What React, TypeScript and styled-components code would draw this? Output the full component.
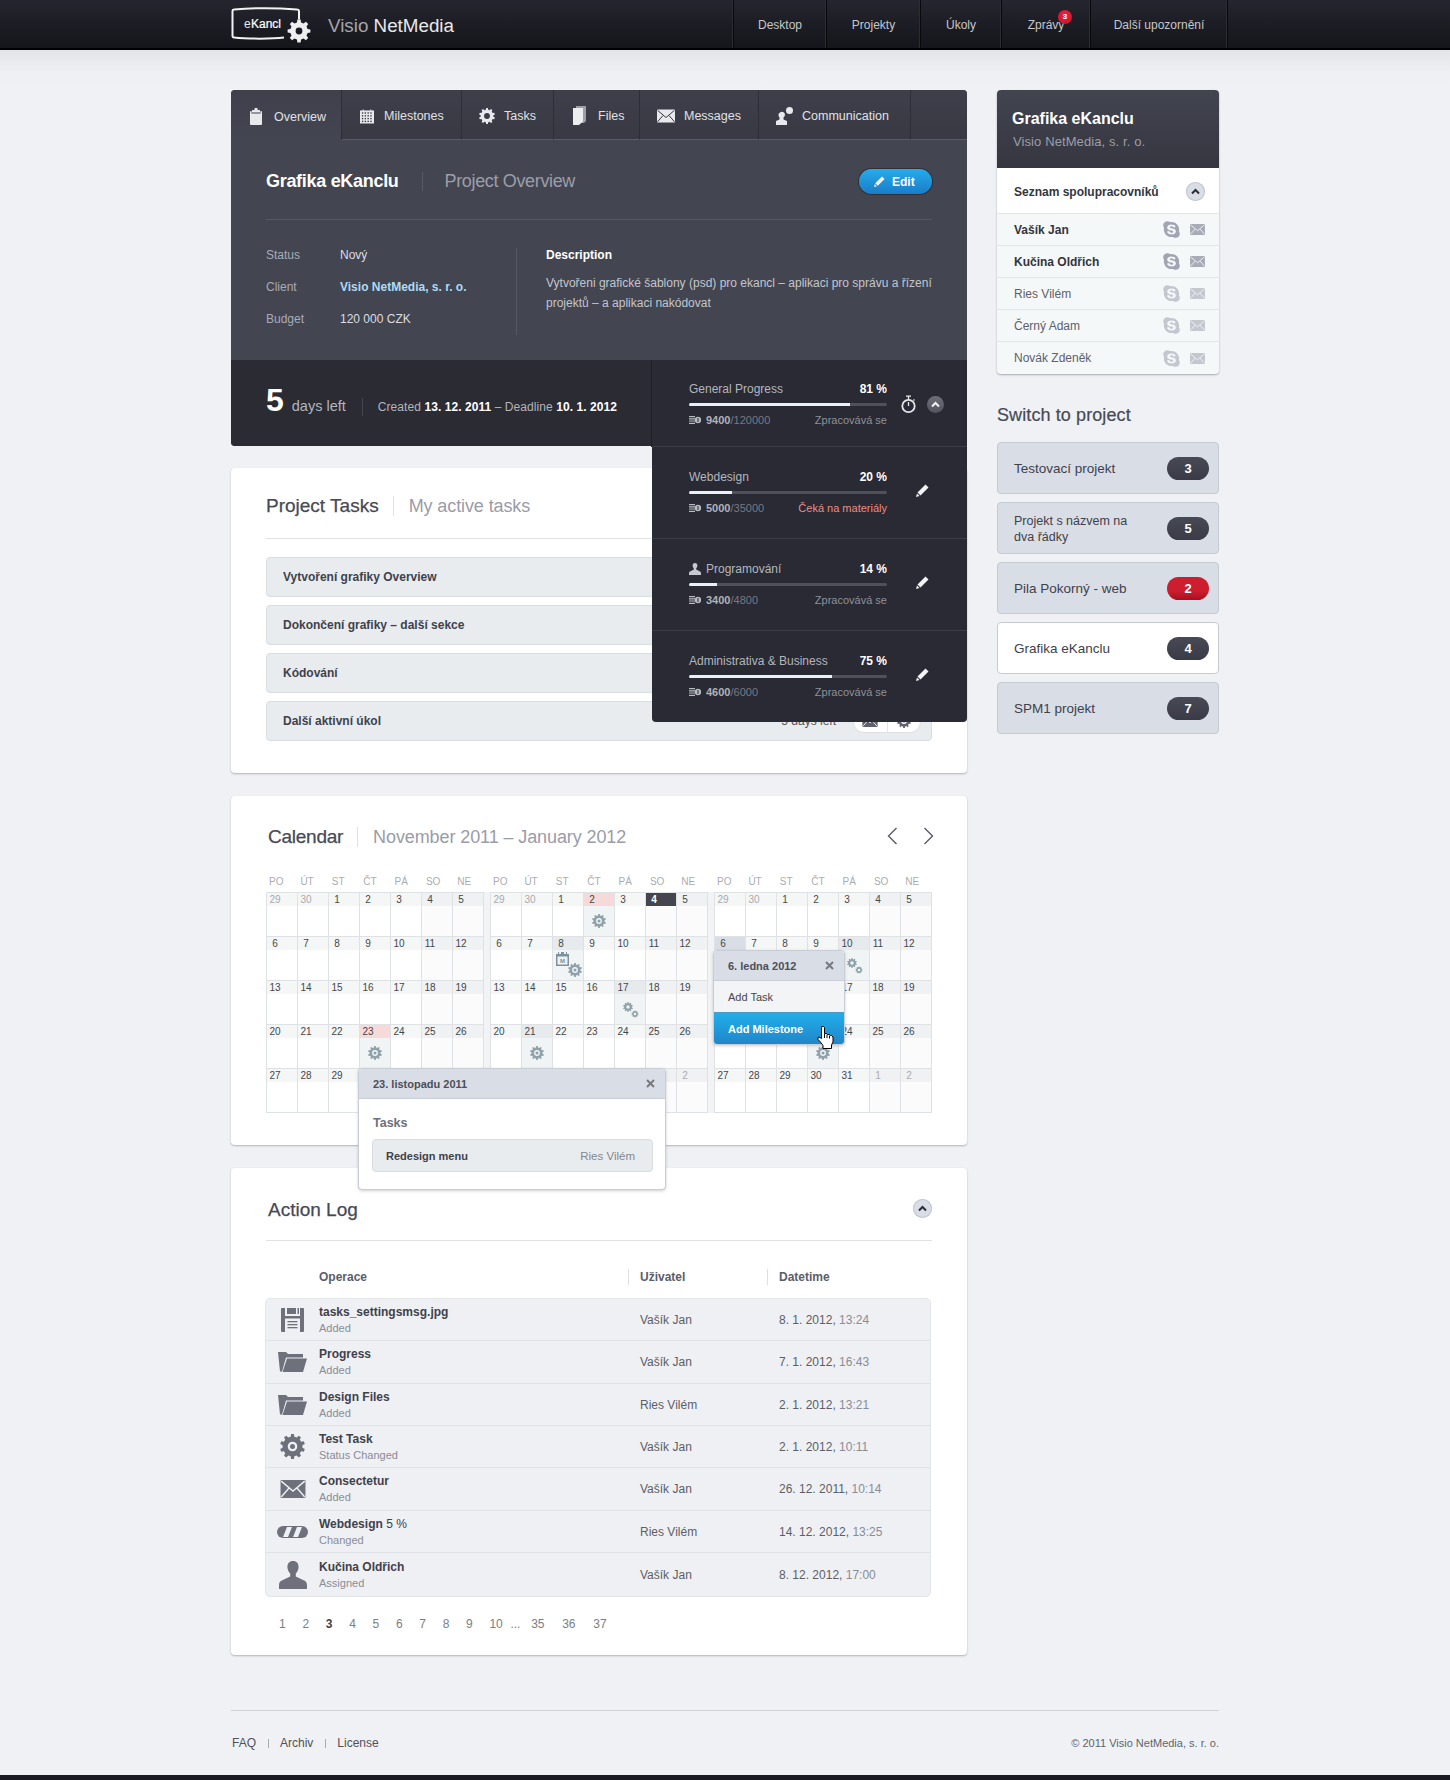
import React from "react";
import styled, { createGlobalStyle, css } from "styled-components";
import { FaSkype } from "react-icons/fa";

const Global = createGlobalStyle`
  html, body { margin: 0; padding: 0; }
  body {
    background: #eff1f4;
    font-family: "Liberation Sans", Arial, sans-serif;
    font-size: 12px;
    color: #3f414c;
  }
  * { box-sizing: border-box; }
`;

/* ---------- icons ---------- */
function gearD(cx: number, cy: number, R: number, r: number, hole: number, teeth = 10) {
  const pts: string[] = [];
  const step = (Math.PI * 2) / teeth;
  for (let i = 0; i < teeth; i++) {
    const a = i * step - Math.PI / 2;
    const w = step * 0.18;
    const w2 = step * 0.3;
    const p = (ang: number, rad: number) => `${(cx + Math.cos(ang) * rad).toFixed(2)} ${(cy + Math.sin(ang) * rad).toFixed(2)}`;
    pts.push(p(a - w2, r), p(a - w, R), p(a + w, R), p(a + w2, r));
  }
  const h = hole;
  return `M${pts.join("L")}Z M${cx - h} ${cy}a${h} ${h} 0 1 0 ${h * 2} 0a${h} ${h} 0 1 0 ${-h * 2} 0Z`;
}

const Gear = ({ size, color, hole = 5, dot = 2.6 }: { size: number; color: string; hole?: number; dot?: number }) => (
  <svg width={size} height={size} viewBox="0 0 24 24" fill={color}>
    <path fillRule="evenodd" d={gearD(12, 12, 12, 9.6, hole)} />
    <circle cx="12" cy="12" r={dot} />
  </svg>
);

const Gears = ({ color }: { color: string }) => (
  <svg width="17" height="17" viewBox="0 0 17 17" fill={color}>
    <path fillRule="evenodd" d={gearD(6, 6, 5, 3.9, 1.7)} />
    <path fillRule="evenodd" d={gearD(13, 13, 3.6, 2.8, 1.3)} />
  </svg>
);

const MilestoneIcon = () => (
  <svg width="13" height="14" viewBox="0 0 13 14">
    <path d="M0 2h2V0h1v2h2V0h3v2h2V0h1v2h2v12H0z" fill="#7e929c" />
    <rect x="1.5" y="4.5" width="10" height="8" fill="#eef1f3" />
    <text x="6.5" y="11" fontSize="6" fontWeight="700" textAnchor="middle" fill="#7e929c" fontFamily="Liberation Sans">M</text>
  </svg>
);

const ClipboardIcon = () => (
  <svg width="12" height="17" viewBox="0 0 12 17" fill="#e8e9ed">
    <path d="M4.500 0h3v2H10v2.500H2V2h2.500z" />
    <path d="M1 3h.5v2.500h9V3h.5a1 1 0 0 1 1 1v12a1 1 0 0 1-1 1H1a1 1 0 0 1-1-1V4a1 1 0 0 1 1-1z" />
  </svg>
);

const GridCalIcon = () => (
  <svg width="14" height="15" viewBox="0 0 15 15">
    <path d="M0 1h15v14H0z" fill="#e8e9ed" />
    {[2, 5, 8, 11].map((y) => [1.5, 4.5, 7.5, 10.5].map((x) => (
      <rect key={`${x}-${y}`} x={x + 0.5} y={y + 1} width="1.500" height="1.500" fill="#383944" />
    )))}
    <path d="M3 0h1v2H3zM11 0h1v2h-1z" fill="#e8e9ed" />
  </svg>
);

const FilesIcon = () => (
  <svg width="14" height="20" viewBox="0 0 14 20">
    <path d="M4 0h10v15l-2 2H4z" fill="#9c9ea8" />
    <path d="M1 2h10v13.500L7 19H1z" fill="#eceded" />
  </svg>
);

const MailIcon = ({ w, h, color, cut }: { w: number; h: number; color: string; cut: string }) => (
  <svg width={w} height={h} viewBox="0 0 18 13">
    <rect width="18" height="13" rx="0.5" fill={color} />
    <path d="M0.500 0.800 L9 8 L17.500 0.800 M0.500 12.300 L6 6 M17.500 12.300 L12 6" stroke={cut} strokeWidth="1" fill="none" />
  </svg>
);

const CommIcon = () => (
  <svg width="17" height="18" viewBox="0 0 17 18" fill="#e8e9ed">
    <circle cx="13.500" cy="3.500" r="3.500" />
    <path d="M4 5.500a3 3 0 0 1 5 2c0 1.500-1 2.500-1.500 3v2L11 14v4H0v-4l3.500-1.500v-2C3 10 2.500 9 2.500 8c0-1 .5-2 1.500-2.500z" />
  </svg>
);

const Pencil = ({ size = 13, color = "#f2f3f5" }: { size?: number; color?: string }) => (
  <svg width={size} height={size} viewBox="0 0 13 13" fill={color}>
    <path d="M9.500 0.500 L12.500 3.500 L4.500 11.500 L1.500 8.500 Z" />
    <path d="M1 9.500 L3.500 12 L0 13 Z" />
  </svg>
);

const Chevron = ({ color }: { color: string }) => (
  <svg width="9" height="7" viewBox="0 0 9 7">
    <path d="M1 5.500 L4.500 2 L8 5.500" stroke={color} strokeWidth="2" fill="none" />
  </svg>
);

const TimerIcon = () => (
  <svg width="15" height="19" viewBox="0 0 15 19" fill="none" stroke="#e6e7ea">
    <circle cx="7.500" cy="11" r="6.200" strokeWidth="1.800" />
    <path d="M5 1.200h5M7.500 1.500v3M7.500 11V7M12.500 4.500l1 1" strokeWidth="1.300" />
  </svg>
);

const MoneyIcon = () => (
  <svg width="12" height="8" viewBox="0 0 12 8" fill="#b9bbc3">
    <path d="M0 0h6v1.200H0zM0 2.200h6v1.200H0zM0 4.400h6v1.200H0zM0 6.700h6V8H0z" />
    <circle cx="9" cy="4" r="3.200" />
    <rect x="8.500" y="2" width="1" height="4" fill="#292a33" />
  </svg>
);

const PERSON_D =
  "M6 0c1.600 0 2.400 1.100 2.400 2.600 0 1.200-.7 2.300-1.200 2.800v1.200L11 8.500c.7.4 1 1 1 2V12H0v-1.500c0-1 .3-1.600 1-2l3.800-1.900V5.400C4.300 4.900 3.600 3.800 3.600 2.600 3.600 1.100 4.400 0 6 0z";

const Person = ({ size = 12, color = "#c6c8ce" }: { size?: number; color?: string }) => (
  <svg width={size} height={size} viewBox="0 0 12 12" fill={color}>
    <path d={PERSON_D} />
  </svg>
);

const FloppyIcon = () => (
  <svg width="23" height="24" viewBox="0 0 23 24" fill="#6e717c">
    <path d="M1 0h3v8h15V0h3a1 1 0 0 1 1 1v22a1 1 0 0 1-1 1H1a1 1 0 0 1-1-1V1a1 1 0 0 1 1-1z" />
    <path d="M6 0h9v6H6zM16.500 0H18v6h-1.500z" />
    <rect x="4" y="10.500" width="15" height="13.500" fill="#eef0f3" />
    <rect x="6.500" y="13" width="10" height="1.300" />
    <rect x="6.500" y="16" width="10" height="1.300" />
    <rect x="6.500" y="19" width="10" height="1.300" />
  </svg>
);

const FolderIcon = () => (
  <svg width="29" height="20" viewBox="0 0 29 20" fill="#6e717c">
    <path d="M0 0h8l2 2h15v3.500H8L4 19.500H2z" />
    <path d="M9 6.500h20L25 20H4.500z" />
  </svg>
);

const BigMail = () => <MailIcon w={28} h={18} color="#6e717c" cut="#eef0f3" />;

const StripesIcon = () => (
  <svg width="31" height="12" viewBox="0 0 31 12">
    <rect width="31" height="12" rx="6" fill="#6e717c" />
    <path d="M6 11 L10 1 h5 L11 11z M16 11 L20 1 h5 L21 11z" fill="#eef0f3" />
  </svg>
);

const CloseX = ({ color = "#77797f" }: { color?: string }) => (
  <svg width="9" height="9" viewBox="0 0 9 9">
    <path d="M1 1 L8 8 M8 1 L1 8" stroke={color} strokeWidth="2" />
  </svg>
);

const ArrowIcon = ({ right }: { right?: boolean }) => (
  <svg width="11" height="18" viewBox="0 0 11 18" style={right ? { transform: "scaleX(-1)" } : undefined}>
    <path d="M9.500 1 L1.500 9 L9.500 17" stroke="#5a5c68" strokeWidth="1.400" fill="none" />
  </svg>
);

const HandCursor = () => (
  <svg width="18" height="23" viewBox="0 0 18 23">
    <path
      d="M5.500.5h2l1 1v6h2l1 1h2l1 1h1l1.500 1.500v5l-1.500 3v3.500h-8.500v-3l-3-4-2-2v-2l1-.5 2.500 1.500v-11z"
      fill="#fff"
      stroke="#000"
      strokeWidth="1"
    />
    <path d="M8.500 8v4M11 8.500v3.500M13.500 9.500v3" stroke="#000" strokeWidth="1" />
  </svg>
);

const LogoMark = () => (
  <svg width="84" height="38" viewBox="0 0 84 38">
    <path
      d="M3 3.500C20 2 48 2 66 3.500M66 3.500c1.500 0 2 1 2 2v8M3 3.500c-1 0-1.500 1-1.500 2v24c0 1 .5 2 1.500 2 14 1.500 38 1.500 50 0M1.500 6v24"
      stroke="#f2f2f2"
      strokeWidth="2"
      fill="none"
    />
    <text x="13" y="22" fontFamily="Liberation Sans" fontSize="12" fill="#e8e8ea">e</text>
    <text x="20" y="22" fontFamily="Liberation Sans" fontSize="12" fill="#fff" stroke="#fff" strokeWidth="0.2">Kancl</text>
    <path fillRule="evenodd" fill="#eeeeee" d={gearD(68, 25, 11.500, 8.800, 3.400, 8)} />
  </svg>
);

/* ---------- header ---------- */
const TopBar = styled.header`
  height: 50px;
  background: linear-gradient(#24252e, #15161b);
  border-bottom: 2px solid #000;
`;
const TopInner = styled.div`
  width: 988px;
  height: 50px;
  margin: 0 auto;
  display: flex;
  align-items: center;
`;
const Brand = styled.div`
  margin-left: 13px;
  padding-top: 1px;
  font-size: 18.800px;
  color: #a4a5ab;
  b { font-weight: 400; color: #e8e8ea; }
`;
const Nav = styled.nav`
  display: flex;
  height: 48px;
  align-self: flex-start;
  margin-left: auto;
  margin-right: -9px;
  border-left: 1px solid #08090b;
  box-shadow: -1px 0 0 #2b2c34;
`;
const NavItem = styled.a<{ $w: number }>`
  position: relative;
  width: ${(p) => p.$w}px;
  display: flex;
  align-items: center;
  justify-content: center;
  padding-top: 2px;
  color: #c6c7cb;
  font-size: 12px;
  border-right: 1px solid #08090b;
  box-shadow: inset -1px 0 0 #2b2c34;
`;
const NavBadge = styled.span`
  position: absolute;
  top: 10px;
  left: 56px;
  width: 14px;
  height: 14px;
  border-radius: 50%;
  background: radial-gradient(circle at 50% 35%, #f1213f, #c70f28);
  color: #fff;
  font-size: 8px;
  font-weight: 700;
  line-height: 14px;
  text-align: center;
`;

/* ---------- page ---------- */
const Shade = styled.div`
  height: 40px;
  background: linear-gradient(#e3e4e7, #eef0f3 24px, #eff1f4);
`;
const Page = styled.div`
  width: 988px;
  margin: 0 auto;
  display: flex;
  gap: 30px;
  align-items: flex-start;
`;
const MainCol = styled.main`
  width: 736px;
  display: flex;
  flex-direction: column;
`;
const Aside = styled.aside`
  width: 222px;
`;

/* ---------- overview panel ---------- */
const Panel = styled.section`
  position: relative;
  z-index: 3;
  background: #434551;
  border-radius: 4px;
`;
const Tabs = styled.div`
  display: flex;
  height: 50px;
`;
const Tab = styled.a<{ $w: number; $active?: boolean; $left?: number; $gap?: number }>`
  width: ${(p) => p.$w}px;
  display: flex;
  align-items: center;
  gap: ${(p) => p.$gap ?? 9}px;
  padding-top: 3px;
  padding-left: ${(p) => p.$left ?? 18}px;
  color: #e0e1e5;
  font-size: 12.500px;
  border-right: 1px solid #2d2e37;
  ${(p) =>
    p.$active
      ? css`
          background: linear-gradient(#3f404c, #434551);
          border-top-left-radius: 4px;
        `
      : css`
          background: linear-gradient(#3e3f4a, #383943);
          border-bottom: 1px solid #5a5c68;
        `}
`;
const TabFill = styled.div`
  flex: 1;
  background: linear-gradient(#3e3f4a, #383943);
  border-bottom: 1px solid #5a5c68;
  border-top-right-radius: 4px;
`;
const PanelBody = styled.div`
  height: 220px;
  padding: 0 35px;
`;
const TitleRow = styled.div`
  height: 80px;
  display: flex;
  align-items: center;
  padding-top: 4px;
  border-bottom: 1px solid #565863;
`;
const PanelTitle = styled.h1`
  margin: 0;
  font-size: 18px;
  font-weight: 700;
  color: #fff;
  letter-spacing: -0.3px;
`;
const PanelSub = styled.span`
  margin-left: 23px;
  padding-left: 22px;
  border-left: 1px solid #565863;
  font-size: 18px;
  line-height: 19px;
  color: #9c9ea9;
  letter-spacing: -0.35px;
`;
const EditButton = styled.a`
  margin-left: auto;
  width: 73px;
  height: 25px;
  display: flex;
  align-items: center;
  gap: 7px;
  padding-left: 15px;
  border-radius: 13px;
  background: linear-gradient(#25aceb, #1a7cc7);
  box-shadow: 0 0 0 1px #2f3039;
  color: #fff;
  font-weight: 700;
  font-size: 12px;
`;
const Details = styled.div`
  display: flex;
  margin-top: 28px;
`;
const Facts = styled.dl`
  width: 251px;
  height: 87px;
  margin: 0;
  border-right: 1px solid #565863;
  display: grid;
  grid-template-columns: 74px 1fr;
  grid-auto-rows: 14px;
  row-gap: 18px;
  line-height: 14px;
  dt { color: #a9abb5; }
  dd { margin: 0; color: #dcdde1; }
`;
const ClientLink = styled.a`
  font-weight: 700;
  color: #aedbf2;
`;
const Description = styled.div`
  margin-left: 29px;
  flex: 1;
  h3 { margin: 0 0 11px; font-size: 12px; line-height: 14px; color: #fff; }
  p { margin: 0; line-height: 20px; color: #c3c5cd; }
`;
const Band = styled.div`
  height: 86px;
  background: #2a2b33;
  border-radius: 0 0 4px 4px;
  padding: 22px 35px 0;
  display: flex;
  align-items: baseline;
  color: #b3b5bd;
`;
const BigNum = styled.span`
  font-size: 32px;
  font-weight: 700;
  color: #fff;
`;
const DaysLeft = styled.span`
  margin-left: 8px;
  font-size: 14.500px;
  color: #b4b6bd;
`;
const Dates = styled.span`
  margin-left: 16px;
  padding-left: 15px;
  border-left: 1px solid #44454f;
  font-size: 12px;
  line-height: 18px;
  letter-spacing: 0.07px;
  b { color: #fff; }
`;

const ProgressBox = styled.div`
  position: absolute;
  top: 270px;
  right: 0;
  width: 315px;
  background: #292a33;
  border-radius: 0 0 4px 4px;
`;
const ProgressRow = styled.div<{ $h: number; $top: number }>`
  height: ${(p) => p.$h}px;
  padding-top: ${(p) => p.$top}px;
  padding-left: 37px;
  display: flex;
  align-items: flex-start;
  border-bottom: 1px solid #3c3d47;
  &:first-child { box-shadow: -1px 0 0 #1f2026; }
  &:last-child { border-bottom: 0; }
`;
const ProgressBody = styled.div`
  width: 198px;
`;
const ProgressHead = styled.div`
  display: flex;
  justify-content: space-between;
  line-height: 14px;
  color: #b4b6bd;
  font-size: 12px;
  b { color: #fff; }
  span { display: flex; align-items: center; gap: 5px; }
`;
const Track = styled.div`
  height: 3px;
  margin-top: 7px;
  background: #4f505c;
  border-radius: 2px;
  overflow: hidden;
`;
const Fill = styled.div`
  height: 100%;
  background: #e9f1f6;
`;
const ProgressFoot = styled.div`
  display: flex;
  align-items: center;
  margin-top: 7px;
  line-height: 14px;
  font-size: 11px;
  color: #777983;
  b { color: #b0b2ba; margin-left: 5px; }
`;
const StateText = styled.span<{ $warn?: boolean }>`
  margin-left: auto;
  color: ${(p) => (p.$warn ? "#e98d88" : "#8f919b")};
`;
const RowAction = styled.div<{ $shift: number }>`
  flex: 1;
  align-self: stretch;
  padding-right: 10px;
  display: flex;
  align-items: center;
  justify-content: center;
  gap: 11px;
  margin-top: ${(p) => p.$shift}px;
`;
const ChevronBtn = styled.span<{ $size: number; $light?: boolean }>`
  width: ${(p) => p.$size}px;
  height: ${(p) => p.$size}px;
  border-radius: 50%;
  display: inline-flex;
  align-items: center;
  justify-content: center;
  flex: none;
  ${(p) =>
    p.$light
      ? css`
          background: #d9dde5;
          box-shadow: inset 0 0 0 1px #c2c6cf;
        `
      : css`
          background: linear-gradient(#6d6e78, #53545e);
        `}
`;

/* ---------- generic card ---------- */
const Card = styled.section<{ $mt: number; $pb: number; $pt: number }>`
  position: relative;
  margin-top: ${(p) => p.$mt}px;
  padding: ${(p) => p.$pt}px 35px ${(p) => p.$pb}px;
  background: #fff;
  border-radius: 4px;
  box-shadow: 0 1px 2px rgba(60, 64, 80, 0.35);
`;
const CardHead = styled.div<{ $indent?: number; $pb?: number; $rule?: boolean }>`
  display: flex;
  align-items: center;
  height: 24px;
  box-sizing: content-box;
  padding-bottom: ${(p) => p.$pb ?? 0}px;
  padding-left: ${(p) => p.$indent ?? 0}px;
  ${(p) => p.$rule && css`border-bottom: 1px solid #e0e2e5;`}
`;
const CardTitle = styled.h2<{ $tight?: boolean }>`
  margin: 0;
  font-size: 19px;
  font-weight: 400;
  color: #474954;
  -webkit-text-stroke: 0.25px #474954;
  letter-spacing: ${(p) => (p.$tight ? "-0.25px" : "0")};
`;
const CardSub = styled.span`
  margin-left: 14px;
  padding-left: 15px;
  border-left: 1px solid #dfe1e4;
  font-size: 18px;
  line-height: 20px;
  letter-spacing: -0.1px;
  color: #9a9ca7;
`;

/* tasks */
const TaskList = styled.div`
  margin-top: 18px;
  display: flex;
  flex-direction: column;
  gap: 8px;
`;
const TaskRow = styled.div`
  height: 40px;
  display: flex;
  align-items: center;
  padding: 0 10px 0 16px;
  background: #e8ecef;
  border: 1px solid #d9dde1;
  border-radius: 4px;
  font-weight: 700;
  color: #3f414c;
`;
const TaskLeft = styled.span`
  margin-left: auto;
  font-weight: 400;
  font-size: 12px;
  color: #555;
`;
const TaskButtons = styled.div`
  margin-left: 17px;
  width: 68px;
  height: 24px;
  display: flex;
  background: #fff;
  border: 1px solid #dde0e4;
  border-radius: 11px;
  span {
    flex: 1;
    display: flex;
    align-items: center;
    justify-content: center;
  }
  span + span { border-left: 1px solid #e2e4e8; }
`;

/* calendar */
const HeadTools = styled.div<{ $mt: number; $mr: number }>`
  margin-left: auto;
  margin-top: ${(p) => p.$mt}px;
  margin-right: ${(p) => p.$mr}px;
  display: flex;
  gap: 25px;
`;
const Months = styled.div`
  margin-top: 27px;
  display: grid;
  grid-template-columns: repeat(3, 218px);
  column-gap: 6px;
`;
const WeekHead = styled.div`
  display: grid;
  grid-template-columns: repeat(7, 31.400px);
  height: 16px;
  span {
    padding-left: 3px;
    font-size: 10px;
    line-height: 12px;
    color: #aaacb0;
  }
`;
const MonthGrid = styled.div<{ $strip?: boolean }>`
  display: grid;
  grid-template-columns: repeat(7, 31px);
  width: 218px;
  border-left: 1px solid #dfe2e5;
  border-top: 1px solid #dfe2e5;
  ${(p) => p.$strip && css`box-shadow: 6px 0 0 #f1f3f4;`}
`;
const headBg = {
  pink: "#f6d9d9",
  dark: "#43454f",
  gray: "#e6eaec",
  blue: "#d9dde5",
};
type HeadKind = keyof typeof headBg;
const Cell = styled.div<{ $weekend: boolean; $fill?: boolean }>`
  height: 44px;
  border-right: 1px solid #dfe2e5;
  border-bottom: 1px solid #dfe2e5;
  background: ${(p) => (p.$fill ? "#f1f4f5" : p.$weekend ? "#fbfbfb" : "#fff")};
  display: flex;
  flex-direction: column;
`;
const CellHead = styled.div<{ $weekend: boolean; $kind?: HeadKind; $muted?: boolean }>`
  height: 13px;
  font-size: 10px;
  line-height: 13px;
  background: ${(p) => (p.$kind ? headBg[p.$kind] : p.$weekend ? "#eff1f2" : "#f5f6f6")};
  color: ${(p) => (p.$kind === "dark" ? "#fff" : p.$muted ? "#a9abb0" : "#44464c")};
  font-weight: ${(p) => (p.$kind === "dark" ? 700 : 400)};
  span { display: block; width: 16px; text-align: center; }
`;
const CellBody = styled.div<{ $col?: boolean }>`
  flex: 1;
  display: flex;
  align-items: center;
  justify-content: center;
  ${(p) =>
    p.$col &&
    css`
      flex-direction: column;
      align-items: stretch;
      justify-content: flex-start;
      padding: 2px 1px 0 3px;
    `}
`;
const GearEnd = styled.div`
  align-self: flex-end;
  margin-top: -3px;
  line-height: 0;
`;
const CalPopup = styled.div<{ $left: number; $top: number; $w: number }>`
  position: absolute;
  z-index: 5;
  left: ${(p) => p.$left}px;
  top: ${(p) => p.$top}px;
  width: ${(p) => p.$w}px;
  background: #fff;
  border: 1px solid #c9cdd5;
  border-radius: 4px;
  box-shadow: 0 1px 3px rgba(60, 64, 80, 0.25);
`;
const PopHead = styled.div`
  height: 30px;
  display: flex;
  align-items: center;
  justify-content: space-between;
  padding: 0 10px 0 14px;
  background: #d9dde5;
  border-radius: 3px 3px 0 0;
  border-bottom: 1px solid #c9cdd5;
  font-size: 11px;
  font-weight: 700;
  color: #4d4f59;
`;
const PopBody = styled.div`
  padding: 16px 12px 17px 13px;
  h4 {
    margin: 0 0 8px 1px;
    font-size: 12.500px;
    line-height: 16px;
    color: #6e707c;
  }
`;
const PopTask = styled.div`
  height: 33px;
  display: flex;
  align-items: center;
  justify-content: space-between;
  padding: 0 17px 0 13px;
  background: #e8ecef;
  border: 1px solid #d9dde1;
  border-radius: 4px;
  font-size: 11px;
  font-weight: 700;
  color: #3f414c;
  em { font-style: normal; font-size: 11.500px; font-weight: 400; color: #85878f; }
`;
const PopAction = styled.div<{ $primary?: boolean }>`
  position: relative;
  display: flex;
  align-items: center;
  padding-left: 14px;
  font-size: 11px;
  ${(p) =>
    p.$primary
      ? css`
          height: 32px;
          background: linear-gradient(#22aeea, #2086c9);
          border-top: 1px solid #4a9cc4;
          color: #fff;
          font-weight: 700;
          border-radius: 0 0 3px 3px;
        `
      : css`
          height: 31px;
          background: #f2f4f6;
          color: #45474f;
        `}
`;
const CursorSpot = styled.span`
  position: absolute;
  left: 102px;
  top: 13px;
  line-height: 0;
`;

/* action log */
const LogGrid = css`
  display: grid;
  grid-template-columns: 53px 321px 139px 1fr;
  align-items: center;
`;
const LogHead = styled.div`
  ${LogGrid}
  margin-top: 28px;
  height: 16px;
  margin-bottom: 13px;
  font-size: 12px;
  line-height: 16px;
  font-weight: 700;
  color: #5b5d68;
`;
const LogHeadCell = styled.span<{ $rule?: boolean }>`
  ${(p) =>
    p.$rule &&
    css`
      margin-left: -12px;
      padding-left: 11px;
      border-left: 1px solid #dcdee2;
    `}
`;
const LogTable = styled.div`
  margin-left: -1px;
  background: #eef0f3;
  border: 1px solid #e3e5e9;
  border-radius: 5px;
  width: 666px;
`;
const LogRow = styled.div<{ $h: number }>`
  ${LogGrid}
  height: ${(p) => p.$h}px;
  border-bottom: 1px solid #dfe2e6;
  &:last-child { border-bottom: 0; }
`;
const LogIcon = styled.div`
  display: flex;
  justify-content: center;
`;
const LogOp = styled.div`
  line-height: 15px;
  padding-top: 1px;
  b { display: block; color: #3f414c; }
  small { display: block; font-size: 11px; line-height: 16px; color: #8a8c96; }
  span { font-weight: 400; }
`;
const LogUser = styled.div`
  color: #5c5e68;
`;
const LogTime = styled.div`
  color: #5c5e68;
  span { color: #8a8c96; }
`;
const Pager = styled.div`
  margin-top: 20px;
  padding-left: 13px;
  display: flex;
  gap: 16.700px;
  font-size: 12px;
  line-height: 14px;
  color: #7d7e84;
  b { color: #3f414c; }
`;
const PageGap = styled.span<{ $ml: number; $mr?: number }>`
  margin-left: ${(p) => p.$ml}px;
  margin-right: ${(p) => p.$mr ?? 0}px;
`;

/* sidebar */
const Team = styled.section`
  border-radius: 4px;
  background: #f5f8f9;
  box-shadow: 0 1px 2px rgba(60, 64, 80, 0.4);
`;
const TeamHead = styled.div`
  height: 78px;
  padding: 19px 15px 0;
  background: linear-gradient(#42444f, #353640);
  border-radius: 4px 4px 0 0;
  h2 { margin: 0; font-size: 16px; line-height: 20px; font-weight: 700; color: #fff; }
  p { margin: 5px 0 0 1px; font-size: 13px; line-height: 16px; color: #9c9ea8; letter-spacing: 0.1px; }
`;
const TeamBar = styled.div`
  height: 46px;
  display: flex;
  align-items: center;
  justify-content: space-between;
  padding: 2px 14px 0 17px;
  background: #fff;
  border-bottom: 1px solid #e2e5e8;
  font-weight: 700;
  font-size: 12px;
  color: #33353e;
`;
const TeamRow = styled.div<{ $strong?: boolean }>`
  height: 32px;
  display: flex;
  align-items: center;
  padding: 0 14px 0 17px;
  border-bottom: 1px solid #e2e5e8;
  font-size: 12px;
  color: ${(p) => (p.$strong ? "#33353e" : "#5d5f68")};
  font-weight: ${(p) => (p.$strong ? 700 : 400)};
  &:last-child { border-bottom: 0; border-radius: 0 0 4px 4px; }
  svg:first-of-type { margin-left: auto; margin-right: 9px; }
`;
const SwitchTitle = styled.h2`
  margin: 29px 0 15px;
  font-size: 18px;
  line-height: 24px;
  font-weight: 400;
  letter-spacing: 0.1px;
  color: #474954;
  -webkit-text-stroke: 0.2px #474954;
`;
const SwitchList = styled.div`
  display: flex;
  flex-direction: column;
  gap: 8px;
`;
const SwitchItem = styled.a<{ $active?: boolean }>`
  height: 52px;
  display: flex;
  align-items: center;
  justify-content: space-between;
  padding: 0 9px 0 16px;
  background: ${(p) => (p.$active ? "#fff" : "#d9dde5")};
  border: 1px solid #c5cbd3;
  border-radius: 4px;
  color: #3f414c;
`;
const SwitchName = styled.span<{ $small?: boolean }>`
  max-width: 130px;
  padding-top: 1px;
  font-size: ${(p) => (p.$small ? 12.5 : 13.5)}px;
  line-height: 16px;
`;
const SwitchBadge = styled.span<{ $red?: boolean }>`
  flex: none;
  width: 42px;
  height: 23px;
  border-radius: 12px;
  background: ${(p) => (p.$red ? "linear-gradient(#cd1e30 60%, #a90d1c)" : "linear-gradient(#474954, #3a3b46)")};
  color: #fff;
  font-weight: 700;
  font-size: 13px;
  line-height: 23px;
  text-align: center;
`;

/* footer */
const Footer = styled.footer`
  width: 988px;
  margin: 55px auto 0;
  padding: 25px 0;
  border-top: 1px solid #cfd1d5;
  display: flex;
  justify-content: space-between;
  align-items: center;
  line-height: 14px;
`;
const FootLinks = styled.nav`
  display: flex;
  padding-left: 1px;
  color: #4f5058;
  a + a {
    position: relative;
    margin-left: 12px;
    padding-left: 12px;
  }
  a + a::before {
    content: "";
    position: absolute;
    left: 0;
    top: 3px;
    height: 9px;
    border-left: 1px solid #a9abb0;
  }
`;
const Copy = styled.small`
  font-size: 11px;
  color: #62646c;
`;
const BottomBar = styled.div`
  height: 5px;
  background: #1b1c23;
`;

/* ---------- data ---------- */
const navItems = [
  { label: "Desktop", w: 93 },
  { label: "Projekty", w: 94 },
  { label: "Úkoly", w: 81 },
  { label: "Zprávy", w: 89, badge: "3" },
  { label: "Další upozornění", w: 137 },
];

const tabs: { label: string; w: number; icon: React.ReactNode; active?: boolean; left?: number; gap?: number }[] = [
  { label: "Overview", w: 111, icon: <ClipboardIcon />, active: true, left: 19, gap: 12 },
  { label: "Milestones", w: 120, icon: <GridCalIcon />, gap: 10 },
  { label: "Tasks", w: 92, icon: <Gear size={16} color="#e8e9ed" hole={4.4} dot={0} />, left: 17 },
  { label: "Files", w: 86, icon: <FilesIcon />, gap: 12 },
  { label: "Messages", w: 119, icon: <MailIcon w={18} h={14} color="#e8e9ed" cut="#383944" />, left: 17 },
  { label: "Communication", w: 152, icon: <CommIcon />, left: 17 },
];

const progress = [
  { title: "General Progress", pct: 81, bar: 81.5, a: "9400", b: "120000", state: "Zpracovává se", h: 87, top: 22, shift: -20 },
  { title: "Webdesign", pct: 20, bar: 21.7, a: "5000", b: "35000", state: "Čeká na materiály", warn: true, h: 92, top: 23, shift: -27 },
  { title: "Programování", pct: 14, bar: 14, a: "3400", b: "4800", state: "Zpracovává se", h: 92, top: 23, shift: -27, person: true },
  { title: "Administrativa & Business", pct: 75, bar: 72, a: "4600", b: "6000", state: "Zpracovává se", h: 91, top: 23, shift: -27 },
];

const days = ["PO", "ÚT", "ST", "ČT", "PÁ", "SO", "NE"];
type Mark = { head?: HeadKind; fill?: boolean; icon?: "gear" | "gears" | "milestone"; covered?: boolean };
const weeks = (last: (string | number)[]) => [
  ["*29", "*30", 1, 2, 3, 4, 5],
  [6, 7, 8, 9, 10, 11, 12],
  [13, 14, 15, 16, 17, 18, 19],
  [20, 21, 22, 23, 24, 25, 26],
  last,
];
const covered: Mark = { covered: true };
const months: { rows: (string | number)[][]; marks: Record<string, Mark> }[] = [
  {
    rows: weeks([27, 28, 29, 30, "*1", "*2", "*3"]),
    marks: {
      "3-3": { head: "pink", fill: true, icon: "gear" },
      "4-3": covered,
      "4-4": covered,
      "4-5": covered,
      "4-6": covered,
    },
  },
  {
    rows: weeks([27, 28, 29, 30, 31, "*1", "*2"]),
    marks: {
      "0-3": { head: "pink", fill: true, icon: "gear" },
      "0-5": { head: "dark" },
      "1-2": { head: "gray", fill: true, icon: "milestone" },
      "2-4": { head: "gray", fill: true, icon: "gears" },
      "3-1": { head: "gray", fill: true, icon: "gear" },
      "4-0": covered,
      "4-1": covered,
      "4-2": covered,
      "4-3": covered,
      "4-4": covered,
      "4-5": covered,
    },
  },
  {
    rows: weeks([27, 28, 29, 30, 31, "*1", "*2"]),
    marks: {
      "1-0": { head: "blue" },
      "1-4": { head: "gray", fill: true, icon: "gears" },
      "2-0": covered,
      "2-1": covered,
      "2-2": covered,
      "2-3": covered,
      "3-0": covered,
      "3-1": covered,
      "3-2": covered,
      "3-3": { head: "gray", fill: true, icon: "gear", covered: true },
    },
  },
];

const logRows: { h: number; icon: React.ReactNode; name: React.ReactNode; sub: string; user: string; date: string; time: string }[] = [
  { h: 42, icon: <FloppyIcon />, name: "tasks_settingsmsg.jpg", sub: "Added", user: "Vašík Jan", date: "8. 1. 2012,", time: "13:24" },
  { h: 43, icon: <FolderIcon />, name: "Progress", sub: "Added", user: "Vašík Jan", date: "7. 1. 2012,", time: "16:43" },
  { h: 42, icon: <FolderIcon />, name: "Design Files", sub: "Added", user: "Ries Vilém", date: "2. 1. 2012,", time: "13:21" },
  { h: 42, icon: <Gear size={25} color="#6e717c" hole={4.6} dot={2.4} />, name: "Test Task", sub: "Status Changed", user: "Vašík Jan", date: "2. 1. 2012,", time: "10:11" },
  { h: 43, icon: <BigMail />, name: "Consectetur", sub: "Added", user: "Vašík Jan", date: "26. 12. 2011,", time: "10:14" },
  { h: 42, icon: <StripesIcon />, name: <>Webdesign <span>5 %</span></>, sub: "Changed", user: "Ries Vilém", date: "14. 12. 2012,", time: "13:25" },
  { h: 43, icon: <Person size={28} color="#6e717c" />, name: "Kučina Oldřich", sub: "Assigned", user: "Vašík Jan", date: "8. 12. 2012,", time: "17:00" },
];

const team = [
  { name: "Vašík Jan", strong: true },
  { name: "Kučina Oldřich", strong: true },
  { name: "Ries Vilém" },
  { name: "Černý Adam" },
  { name: "Novák Zdeněk" },
];

const projects: { name: string; n: number; red?: boolean; active?: boolean; small?: boolean }[] = [
  { name: "Testovací projekt", n: 3 },
  { name: "Projekt s názvem na dva řádky", n: 5, small: true },
  { name: "Pila Pokorný - web", n: 2, red: true },
  { name: "Grafika eKanclu", n: 4, active: true },
  { name: "SPM1 projekt", n: 7 },
];

const tasks = ["Vytvoření grafiky Overview", "Dokončení grafiky – další sekce", "Kódování", "Další aktivní úkol"];

const CAL = "#8fa1a9";

const Month = ({ rows, marks, strip }: { rows: (string | number)[][]; marks: Record<string, Mark>; strip: boolean }) => (
  <div>
    <WeekHead>
      {days.map((d) => (
        <span key={d}>{d}</span>
      ))}
    </WeekHead>
    <MonthGrid $strip={strip}>
      {rows.map((row, w) =>
        row.map((v, d) => {
          const m = marks[`${w}-${d}`] ?? {};
          const muted = typeof v === "string";
          const label = muted ? (v as string).slice(1) : v;
          const weekend = d > 4;
          return (
            <Cell key={`${w}-${d}`} $weekend={weekend} $fill={m.fill}>
              <CellHead $weekend={weekend} $kind={m.head} $muted={muted}>
                {!m.covered && <span>{label}</span>}
              </CellHead>
              <CellBody $col={m.icon === "milestone"}>
                {m.icon === "gear" && <Gear size={14} color={CAL} />}
                {m.icon === "gears" && <Gears color={CAL} />}
                {m.icon === "milestone" && (
                  <>
                    <MilestoneIcon />
                    <GearEnd>
                      <Gear size={14} color={CAL} />
                    </GearEnd>
                  </>
                )}
              </CellBody>
            </Cell>
          );
        })
      )}
    </MonthGrid>
  </div>
);

export default function App() {
  return (
    <>
      <Global />
      <TopBar>
        <TopInner>
          <LogoMark />
          <Brand>
            Visio <b>NetMedia</b>
          </Brand>
          <Nav>
            {navItems.map((n) => (
              <NavItem key={n.label} $w={n.w}>
                {n.label}
                {n.badge && <NavBadge>{n.badge}</NavBadge>}
              </NavItem>
            ))}
          </Nav>
        </TopInner>
      </TopBar>
      <Shade />
      <Page>
        <MainCol>
          <Panel>
            <Tabs>
              {tabs.map((t) => (
                <Tab key={t.label} $w={t.w} $active={t.active} $left={t.left} $gap={t.gap}>
                  {t.icon}
                  {t.label}
                </Tab>
              ))}
              <TabFill />
            </Tabs>
            <PanelBody>
              <TitleRow>
                <PanelTitle>Grafika eKanclu</PanelTitle>
                <PanelSub>Project Overview</PanelSub>
                <EditButton>
                  <Pencil size={11} />
                  Edit
                </EditButton>
              </TitleRow>
              <Details>
                <Facts>
                  <dt>Status</dt>
                  <dd>Nový</dd>
                  <dt>Client</dt>
                  <dd>
                    <ClientLink>Visio NetMedia, s. r. o.</ClientLink>
                  </dd>
                  <dt>Budget</dt>
                  <dd>120 000 CZK</dd>
                </Facts>
                <Description>
                  <h3>Description</h3>
                  <p>Vytvořeni grafické šablony (psd) pro ekancl – aplikaci pro správu a řízení projektů – a aplikaci nakódovat</p>
                </Description>
              </Details>
            </PanelBody>
            <Band>
              <BigNum>5</BigNum>
              <DaysLeft>days left</DaysLeft>
              <Dates>
                Created <b>13. 12. 2011</b> – Deadline <b>10. 1. 2012</b>
              </Dates>
            </Band>
            <ProgressBox>
              {progress.map((p, i) => (
                <ProgressRow key={p.title} $h={p.h} $top={p.top}>
                  <ProgressBody>
                    <ProgressHead>
                      <span>
                        {p.person && <Person />}
                        {p.title}
                      </span>
                      <b>{p.pct} %</b>
                    </ProgressHead>
                    <Track>
                      <Fill style={{ width: `${p.bar}%` }} />
                    </Track>
                    <ProgressFoot>
                      <MoneyIcon />
                      <b>{p.a}</b>/{p.b}
                      <StateText $warn={p.warn}>{p.state}</StateText>
                    </ProgressFoot>
                  </ProgressBody>
                  <RowAction $shift={p.shift}>
                    {i === 0 ? (
                      <>
                        <TimerIcon />
                        <ChevronBtn $size={17}>
                          <Chevron color="#f2f2f4" />
                        </ChevronBtn>
                      </>
                    ) : (
                      <Pencil />
                    )}
                  </RowAction>
                </ProgressRow>
              ))}
            </ProgressBox>
          </Panel>

          <Card $mt={22} $pt={26} $pb={32}>
            <CardHead $pb={20} $rule>
              <CardTitle>Project Tasks</CardTitle>
              <CardSub>My active tasks</CardSub>
            </CardHead>
            <TaskList>
              {tasks.map((t, i) => (
                <TaskRow key={t}>
                  {t}
                  {i === 3 && (
                    <>
                      <TaskLeft>5 days left</TaskLeft>
                      <TaskButtons>
                        <span>
                          <MailIcon w={16} h={11} color="#5f616c" cut="#fff" />
                        </span>
                        <span>
                          <Gear size={14} color="#5f616c" />
                        </span>
                      </TaskButtons>
                    </>
                  )}
                </TaskRow>
              ))}
            </TaskList>
          </Card>

          <Card $mt={23} $pt={29} $pb={32}>
            <CardHead $indent={2}>
              <CardTitle $tight>Calendar</CardTitle>
              <CardSub>November 2011 – January 2012</CardSub>
              <HeadTools $mt={-2} $mr={-2}>
                <ArrowIcon />
                <ArrowIcon right />
              </HeadTools>
            </CardHead>
            <Months>
              {months.map((m, i) => (
                <Month key={i} rows={m.rows} marks={m.marks} strip={i < 2} />
              ))}
            </Months>
            <CalPopup $left={127} $top={272} $w={308}>
              <PopHead>
                23. listopadu 2011
                <CloseX />
              </PopHead>
              <PopBody>
                <h4>Tasks</h4>
                <PopTask>
                  Redesign menu
                  <em>Ries Vilém</em>
                </PopTask>
              </PopBody>
            </CalPopup>
            <CalPopup $left={482} $top={154} $w={132}>
              <PopHead>
                6. ledna 2012
                <CloseX />
              </PopHead>
              <PopAction>Add Task</PopAction>
              <PopAction $primary>
                Add Milestone
                <CursorSpot>
                  <HandCursor />
                </CursorSpot>
              </PopAction>
            </CalPopup>
          </Card>

          <Card $mt={23} $pt={30} $pb={24}>
            <CardHead $indent={2} $pb={18} $rule>
              <CardTitle>Action Log</CardTitle>
              <HeadTools $mt={-3} $mr={0}>
                <ChevronBtn $size={19} $light>
                  <Chevron color="#2c2d35" />
                </ChevronBtn>
              </HeadTools>
            </CardHead>
            <LogHead>
              <span />
              <LogHeadCell>Operace</LogHeadCell>
              <LogHeadCell $rule>Uživatel</LogHeadCell>
              <LogHeadCell $rule>Datetime</LogHeadCell>
            </LogHead>
            <LogTable>
              {logRows.map((r) => (
                <LogRow key={r.date + r.sub + r.time} $h={r.h}>
                  <LogIcon>{r.icon}</LogIcon>
                  <LogOp>
                    <b>{r.name}</b>
                    <small>{r.sub}</small>
                  </LogOp>
                  <LogUser>{r.user}</LogUser>
                  <LogTime>
                    {r.date} <span>{r.time}</span>
                  </LogTime>
                </LogRow>
              ))}
            </LogTable>
            <Pager>
              {[1, 2].map((n) => (
                <span key={n}>{n}</span>
              ))}
              <b>3</b>
              {[4, 5, 6, 7, 8, 9, 10].map((n) => (
                <span key={n}>{n}</span>
              ))}
              <PageGap $ml={-9}>...</PageGap>
              <PageGap $ml={-6} $mr={1}>35</PageGap>
              <PageGap $ml={0} $mr={1}>36</PageGap>
              <span>37</span>
            </Pager>
          </Card>
        </MainCol>

        <Aside>
          <Team>
            <TeamHead>
              <h2>Grafika eKanclu</h2>
              <p>Visio NetMedia, s. r. o.</p>
            </TeamHead>
            <TeamBar>
              Seznam spolupracovníků
              <ChevronBtn $size={19} $light>
                <Chevron color="#2c2d35" />
              </ChevronBtn>
            </TeamBar>
            {team.map((t) => (
              <TeamRow key={t.name} $strong={t.strong}>
                {t.name}
                <FaSkype size={19} color={t.strong ? "#a2a5b1" : "#c4c7d0"} />
                <MailIcon w={15} h={11} color={t.strong ? "#a9acb7" : "#c4c7d0"} cut="#f5f8f9" />
              </TeamRow>
            ))}
          </Team>
          <SwitchTitle>Switch to project</SwitchTitle>
          <SwitchList>
            {projects.map((p) => (
              <SwitchItem key={p.name} $active={p.active}>
                <SwitchName $small={p.small}>{p.name}</SwitchName>
                <SwitchBadge $red={p.red}>{p.n}</SwitchBadge>
              </SwitchItem>
            ))}
          </SwitchList>
        </Aside>
      </Page>
      <Footer>
        <FootLinks>
          <a>FAQ</a>
          <a>Archiv</a>
          <a>License</a>
        </FootLinks>
        <Copy>© 2011 Visio NetMedia, s. r. o.</Copy>
      </Footer>
      <BottomBar />
    </>
  );
}
